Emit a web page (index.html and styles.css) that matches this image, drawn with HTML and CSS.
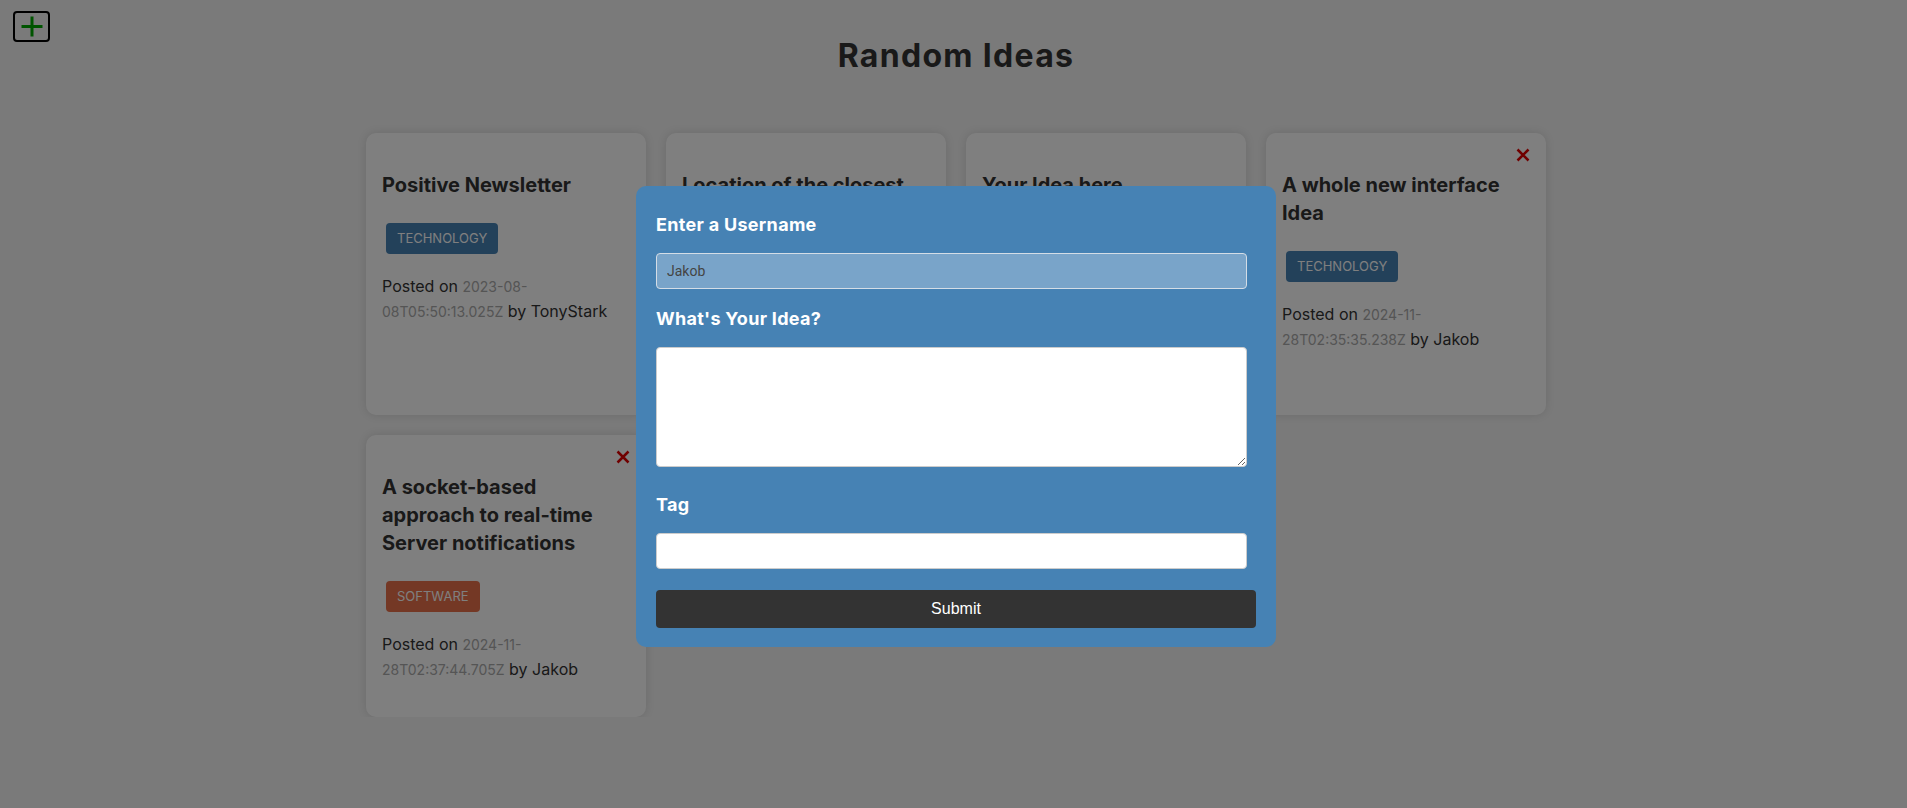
FILE: index.html
```html
<!DOCTYPE html>
<html lang="en">
<head>
<meta charset="utf-8">
<title>Random Ideas</title>
<link rel="stylesheet" href="styles.css">
</head>
<body>
<header class="topbar">
  <button class="add-btn" aria-label="Add idea">
    <svg width="22" height="21" viewBox="0 0 22 21"><path d="M11 0.5v20M0.5 10.5h21" stroke="#00a800" stroke-width="3" fill="none"/></svg>
  </button>
  <h1 class="title">Random Ideas</h1>
  <span></span>
</header>

<main class="ideas">
  <article class="card">
    <h3 class="card-title">Positive Newsletter</h3>
    <span class="tag tag-technology">Technology</span>
    <p class="posted">Posted on <span class="date">2023-08-08T05:50:13.025Z</span> by TonyStark</p>
  </article>
  <article class="card">
    <h3 class="card-title">Location of the closest coffee shop</h3>
    <span class="tag tag-inventions">Inventions</span>
    <p class="posted">Posted on <span class="date">2023-08-08T05:51:20.112Z</span> by BruceWayne</p>
  </article>
  <article class="card">
    <h3 class="card-title">Your Idea here</h3>
    <span class="tag tag-business">Business</span>
    <p class="posted">Posted on <span class="date">2023-08-08T05:52:41.337Z</span> by PeterParker</p>
  </article>
  <article class="card">
    <button class="delete" aria-label="Delete"><svg width="14" height="14" viewBox="0 0 14 14"><path d="M1.5 1.5l11 11M12.5 1.5l-11 11" stroke="#e00000" stroke-width="2.5" fill="none"/></svg></button>
    <h3 class="card-title">A whole new interface Idea</h3>
    <span class="tag tag-technology">Technology</span>
    <p class="posted">Posted on <span class="date">2024-11-28T02:35:35.238Z</span> by Jakob</p>
  </article>
  <article class="card">
    <button class="delete" aria-label="Delete"><svg width="14" height="14" viewBox="0 0 14 14"><path d="M1.5 1.5l11 11M12.5 1.5l-11 11" stroke="#e00000" stroke-width="2.5" fill="none"/></svg></button>
    <h3 class="card-title">A socket-based approach to real-time Server notifications</h3>
    <span class="tag tag-software">Software</span>
    <p class="posted">Posted on <span class="date">2024-11-28T02:37:44.705Z</span> by Jakob</p>
  </article>
</main>

<div class="overlay">
  <div class="modal">
    <form class="idea-form">
      <label class="label first" for="username">Enter a Username</label>
      <input class="field field-user" id="username" type="text" value="Jakob">
      <label class="label" for="text">What's Your Idea?</label>
      <textarea class="field field-text" id="text"></textarea>
      <label class="label" for="tag">Tag</label>
      <input class="field field-tag" id="tag" type="text">
      <button class="submit" type="button">Submit</button>
    </form>
  </div>
</div>
</body>
</html>
```

FILE: styles.css
```css
* { box-sizing: border-box; }

body {
  margin: 0;
  background: #f4f4f4;
  font-family: Inter, "Open Sans", sans-serif;
  color: #333;
}

.topbar {
  display: grid;
  grid-template-columns: 1fr auto 1fr;
  align-items: start;
  padding: 11px 8px 0 13px;
}

.add-btn {
  justify-self: start;
  width: 37px;
  height: 31px;
  padding: 0;
  display: flex;
  align-items: center;
  justify-content: center;
  background: transparent;
  border: 2px solid #000;
  border-radius: 4px;
}

.title {
  margin: 26px 0 0;
  font: 700 32px/38px Inter, sans-serif;
  letter-spacing: 1.3px;
  color: #333;
  text-align: center;
}

.ideas {
  margin-top: 58px;
  padding-left: 5px;
  display: grid;
  grid-template-columns: repeat(4, 280px);
  grid-auto-rows: 282px;
  gap: 20px;
  justify-content: center;
}

.card {
  position: relative;
  background: #fff;
  border-radius: 10px;
  padding: 38px 16px 16px;
  box-shadow: 0 0 10px rgba(0, 0, 0, 0.12);
}

.card-title {
  margin: 0 0 24px;
  font: 700 20px/28px Inter, sans-serif;
  color: #333;
}

.tag {
  display: inline-block;
  margin-left: 4px;
  padding: 5px 11px;
  font: 400 13px/21px Inter, sans-serif;
  color: #fff;
  text-transform: uppercase;
  border-radius: 4px;
}

.tag-technology { background: steelblue; }
.tag-software { background: #e8704a; }
.tag-inventions { background: #a0522d; }
.tag-business { background: #3a9a5b; }

.posted {
  margin: 20px 0 0;
  font: 400 16px/24px Inter, sans-serif;
  color: #333;
}

.date {
  font-size: 14px;
  color: #aaa;
}

.delete {
  position: absolute;
  top: 15px;
  right: 16px;
  padding: 0;
  border: 0;
  background: transparent;
  line-height: 0;
}

.overlay {
  position: fixed;
  inset: 0;
  background: rgba(0, 0, 0, 0.5);
  display: flex;
  justify-content: center;
  align-items: flex-start;
  padding-top: 186px;
  padding-left: 5px;
}

.modal {
  width: 640px;
  background: steelblue;
  border-radius: 10px;
  padding: 20px 20px 19px;
}

.label {
  display: block;
  margin: 0 0 15px;
  font: 700 18px/27px Inter, sans-serif;
  letter-spacing: 0.3px;
  color: #fff;
}

.label.first { margin-top: 5px; }

.field {
  display: block;
  width: 591px;
  border: 1px solid #ccc;
  border-radius: 4px;
  padding: 0 10px;
  font: 400 14px Roboto, sans-serif;
  color: #444;
  background: #fff;
}

.field-user {
  height: 36px;
  margin-bottom: 16px;
  background: rgba(255, 255, 255, 0.28);
  border-color: #d4dde6;
}

.field-text {
  height: 120px;
  margin-bottom: 24px;
  padding: 8px 10px;
}

.field-tag {
  height: 36px;
  margin-bottom: 21px;
}

.submit {
  display: block;
  width: 100%;
  height: 38px;
  border: 0;
  border-radius: 4px;
  background: #333;
  color: #fff;
  font: 400 16px "Liberation Sans", Arial, sans-serif;
}
```
